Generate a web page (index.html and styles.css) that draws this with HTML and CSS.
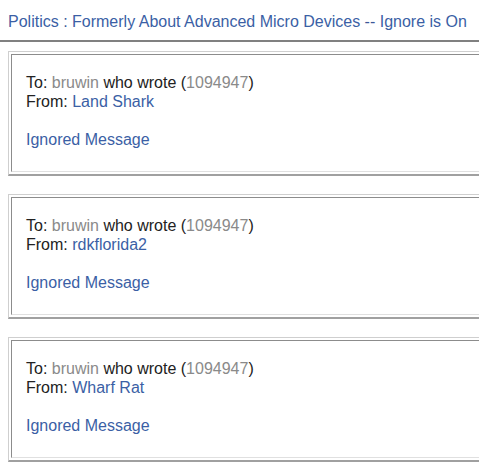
FILE: index.html
```html
<!DOCTYPE html>
<html>
<head>
<meta charset="utf-8">
<link rel="stylesheet" href="styles.css">
</head>
<body>
<div class="header"><a class="link" href="#">Politics</a> : <a class="link" href="#">Formerly About Advanced Micro Devices</a> -- <a class="link" href="#">Ignore is On</a></div>
<div class="rule"></div>
<div class="list">
  <div class="box"><div class="cell">
    <div class="line">To: <span class="muted">bruwin</span> who wrote (<span class="muted">1094947</span>)</div>
    <div class="line">From: <a class="link" href="#">Land Shark</a></div>
    <div class="gapline"></div>
    <div class="line"><a class="link" href="#">Ignored Message</a></div>
  </div></div>
  <div class="box"><div class="cell">
    <div class="line">To: <span class="muted">bruwin</span> who wrote (<span class="muted">1094947</span>)</div>
    <div class="line">From: <a class="link" href="#">rdkflorida2</a></div>
    <div class="gapline"></div>
    <div class="line"><a class="link" href="#">Ignored Message</a></div>
  </div></div>
  <div class="box"><div class="cell">
    <div class="line">To: <span class="muted">bruwin</span> who wrote (<span class="muted">1094947</span>)</div>
    <div class="line">From: <a class="link" href="#">Wharf Rat</a></div>
    <div class="gapline"></div>
    <div class="line"><a class="link" href="#">Ignored Message</a></div>
  </div></div>
</div>
</body>
</html>
```
FILE: styles.css
```css
body {
  margin: 0;
  background: #fff;
  font-family: Arial, "Liberation Sans", sans-serif;
  font-size: 16px;
  color: #222;
}
.header {
  padding: 13px 8px 0 8px;
  height: 27px;
  line-height: 18px;
  color: #3b5998;
  white-space: nowrap;
}
.link { color: #3b5fa5; text-decoration: none; }
.muted { color: #8a8a8a; }
.rule {
  height: 2px;
  background: #808080;
}
.list {
  padding: 9px 0 0 8px;
  display: flex;
  flex-direction: column;
  gap: 18px;
  overflow: hidden;
}
.box {
  margin-right: -20px;
  border-top: 1px solid #cfcfcf;
  border-left: 1px solid #cfcfcf;
  border-bottom: 2px solid #a0a0a0;
  border-right: 2px solid #a0a0a0;
  padding: 2px;
}
.cell {
  border-top: 1px solid #8c8c8c;
  border-left: 1px solid #8c8c8c;
  border-bottom: 1px solid #e0e0e0;
  border-right: 1px solid #e0e0e0;
  padding: 18px 14px 22px 14px;
}
.line { line-height: 19px; white-space: nowrap; }
.gapline { height: 19px; }
```
